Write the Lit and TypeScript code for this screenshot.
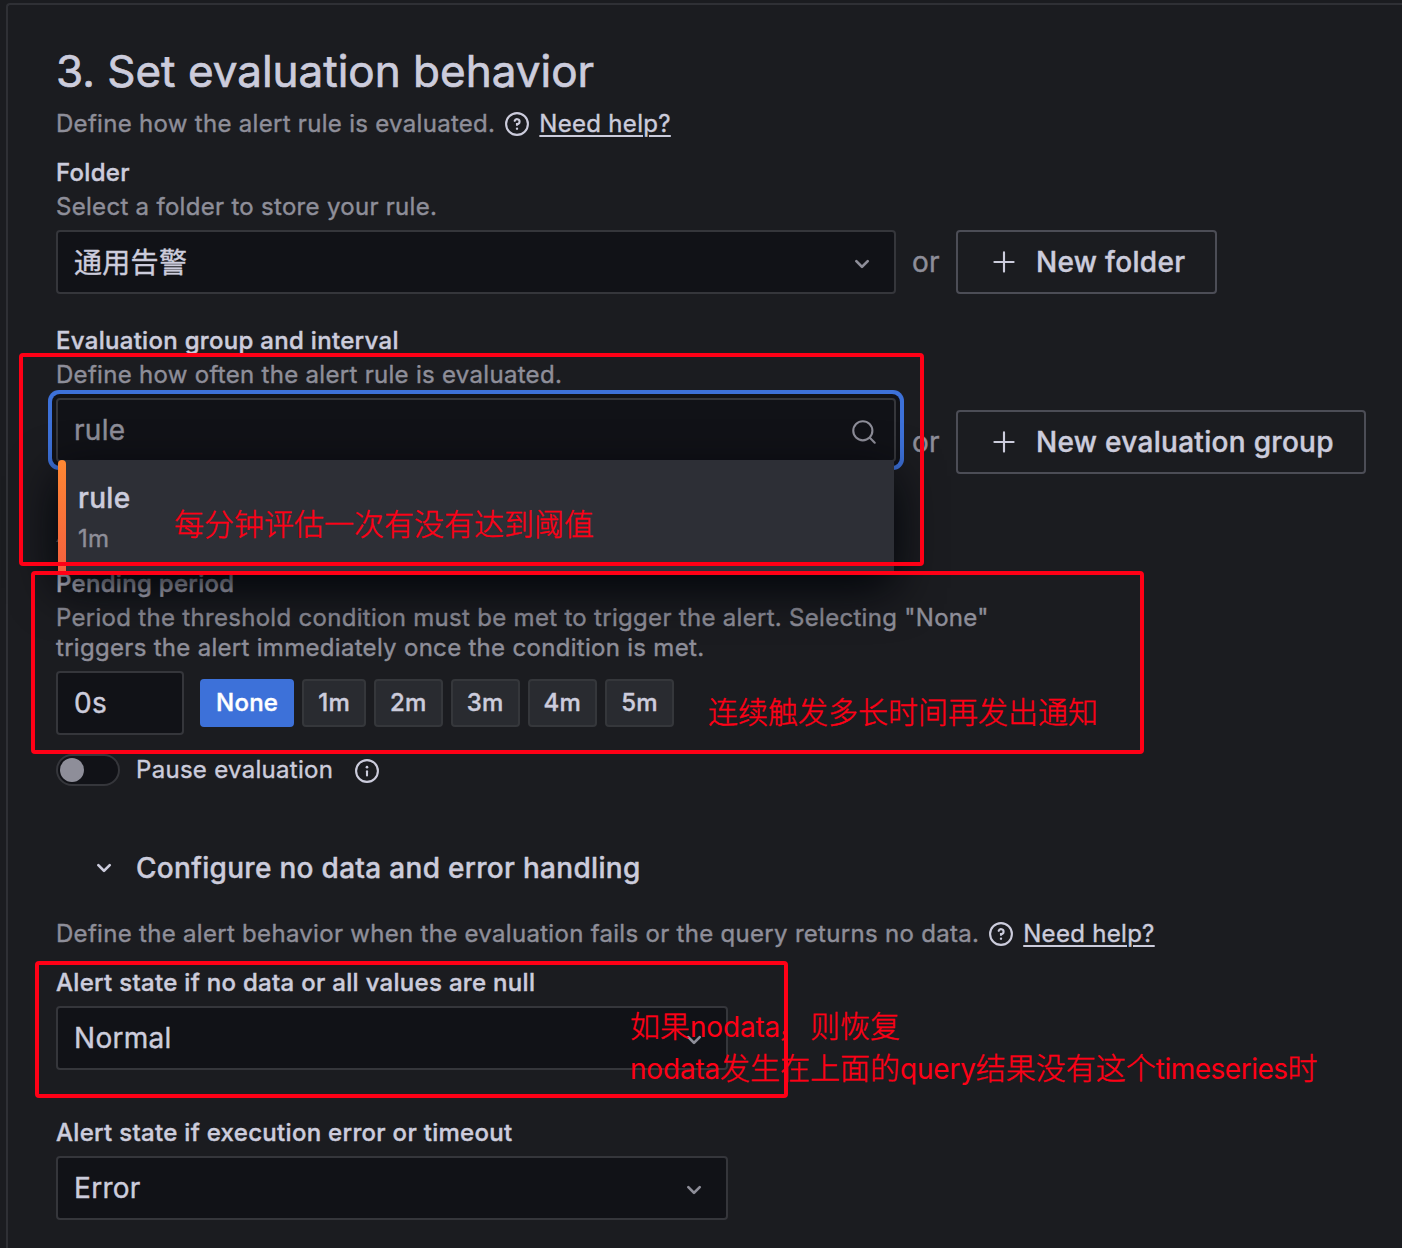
import { LitElement, html, css, svg } from "lit";
import { customElement, property } from "lit/decorators.js";

const ICONS: Record<string, unknown> = {
  question: svg`
    <circle class="s" cx="12" cy="12" r="9.35"></circle>
    <path class="s" d="M10 9.3A2.15 2.15 0 1 1 12 12.1V12.9"></path>
    <circle cx="12" cy="16" r="1"></circle>`,
  info: svg`
    <circle class="s" cx="12" cy="12" r="9.35"></circle>
    <path class="s" d="M12 12.2V15.8"></path>
    <circle cx="12" cy="8.7" r="1.15"></circle>`,
  down: svg`<path d="M17,9.17a1,1,0,0,0-1.41,0L12,12.71,8.46,9.17a1,1,0,0,0-1.41,0,1,1,0,0,0,0,1.42l4.24,4.24a1,1,0,0,0,1.42,0L17,10.59A1,1,0,0,0,17,9.17Z"></path>`,
  plus: svg`<path d="M19.2,11.2H12.8V4.8a.8.8,0,0,0-1.6,0v6.4H4.8a.8.8,0,0,0,0,1.6h6.4v6.4a.8.8,0,0,0,1.6,0V12.8h6.4a.8.8,0,0,0,0-1.6Z"></path>`,
  search: svg`
    <circle class="s" cx="11" cy="11" r="8.2"></circle>
    <path class="s" d="M17 17L21.2 21.2"></path>`,
};

@customElement("ui-icon")
export class UiIcon extends LitElement {
  @property() name = "down";

  static styles = css`
    :host { display: block; width: 32px; height: 32px; flex: none; }
    svg { display: block; width: 100%; height: 100%; fill: currentColor; }
    .s { fill: none; stroke: currentColor; stroke-width: 1.8; stroke-linecap: round; }
  `;

  render() {
    return html`<svg viewBox="0 0 24 24">${ICONS[this.name]}</svg>`;
  }
}

@customElement("app-root")
export class AppRoot extends LitElement {
  private periods = ["None", "1m", "2m", "3m", "4m", "5m"];

  static styles = css`
    :host {
      display: block;
      position: relative;
      width: 1402px;
      height: 1248px;
      overflow: hidden;
      background: #1b1c20;
      color: #ccccdc;
      font-family: Inter, "Noto Sans CJK SC", sans-serif;
      font-size: 24px;
      line-height: 30px;
      letter-spacing: 0.0125em;
      -webkit-text-stroke: 0.4px currentColor;
      box-sizing: border-box;
      padding: 3px 0 0 6px;
    }
    *, *::before { box-sizing: border-box; }
    .panel {
      height: 1300px;
      border: 2px solid #2f3035;
      border-right: 0;
      border-radius: 4px 0 0 0;
      padding: 40px 0 0 48px;
    }
    h2 {
      margin: 0;
      font-size: 44px;
      line-height: 52px;
      font-weight: 400;
      letter-spacing: 0;
      -webkit-text-stroke-width: 0.7px;
    }
    .muted { color: #8e8e99; }
    .line { display: flex; align-items: center; height: 30px; }
    .line ui-icon { width: 28px; height: 28px; margin: 0 8px; }
    .intro { margin-top: 12px; }
    .link { color: #ccccdc; text-decoration: underline; text-underline-offset: 3px; text-decoration-thickness: 2px; }
    .label { font-weight: 500; height: 30px; }
    .gap-label { margin-top: 19px; }
    .eval { margin-top: 32px; }
    .hint { margin-top: 4px; color: #8e8e99; }
    .row { display: flex; align-items: center; gap: 16px; margin-top: 8px; font-size: 28px; letter-spacing: 0.0107em; }
    .input {
      display: flex;
      align-items: center;
      justify-content: space-between;
      width: 840px;
      height: 64px;
      padding: 0 16px;
      border: 2px solid #35363b;
      border-radius: 4px;
      background: #111217;
      font-size: 28px;
      letter-spacing: 0.0107em;
    }
    .input ui-icon { color: #8e8e99; margin-top: 4px; }
    .cjk { padding-top: 2px; }
    .state { width: 672px; margin-top: 8px; }
    .focused { position: relative; color: #8e8e99; box-shadow: 0 0 0 4px #111217, 0 0 0 8px #3d71d9; }
    .focused ui-icon { width: 28px; height: 28px; }
    .group { align-items: flex-start; }
    .group .or, .group .btn { margin-top: 12px; }
    .or { width: 28px; line-height: 64px; color: #8e8e99; }
    .btn {
      display: flex;
      align-items: center;
      gap: 16px;
      height: 64px;
      padding: 0 30px;
      border: 2px solid #4c4d56;
      border-radius: 4px;
      font-weight: 500;
      white-space: nowrap;
    }
    .menu {
      position: absolute;
      left: 0;
      top: 60px;
      width: 836px;
      height: 112px;
      padding: 22px 0 0 20px;
      background: #2d2f36;
      box-shadow: 0 16px 48px #010409;
      color: #ccccdc;
      z-index: 2;
    }
    .menu::before {
      content: "";
      position: absolute;
      left: 0;
      top: 0;
      width: 8px;
      height: 112px;
      border-radius: 4px 4px 0 0;
      background: linear-gradient(#ff8833, #f55f3e);
    }
    .opt { font-weight: 500; line-height: 32px; }
    .sub { font-size: 24px; line-height: 30px; margin-top: 10px; color: #8e8e99; letter-spacing: 0.0125em; }
    .pending { margin-top: 95px; }
    .wide { width: 960px; }
    .periods { gap: 8px; }
    .duration { width: 128px; margin-right: 8px; }
    .chip {
      display: flex;
      align-items: center;
      height: 48px;
      padding: 0 14px;
      border: 2px solid #35373b;
      border-radius: 4px;
      background: #292b30;
      font-size: 24px;
      font-weight: 500;
      letter-spacing: 0.0107em;
    }
    .chip.on { background: #3d71d9; border-color: #3d71d9; color: #fff; }
    .pause { display: flex; align-items: center; margin-top: 19px; height: 32px; }
    .switch {
      width: 64px;
      height: 32px;
      padding: 2px;
      border: 2px solid #35363b;
      border-radius: 16px;
      background: #111217;
      margin-right: 16px;
    }
    .knob { width: 24px; height: 24px; border-radius: 50%; background: #8e8e99; }
    .pause ui-icon { width: 28px; height: 28px; margin: 2px 0 0 20px; }
    .collapse {
      display: flex;
      align-items: center;
      gap: 16px;
      height: 32px;
      margin: 66px 0 0 32px;
      font-size: 28px;
      font-weight: 500;
      letter-spacing: 0.0107em;
    }
    .nodata { margin-top: 35px; }
    .exec { margin-top: 48px; }
    .mark { position: absolute; border: 4px solid #ff0016; border-radius: 4px; z-index: 5; }
    .m1 { left: 19px; top: 353px; width: 905px; height: 213px; }
    .m2 { left: 31px; top: 571px; width: 1113px; height: 183px; }
    .m3 { left: 35px; top: 961px; width: 753px; height: 137px; }
    .note {
      position: absolute;
      z-index: 6;
      color: #ff0016;
      font: 300 30px/42px "Noto Sans CJK SC", sans-serif;
      letter-spacing: 0;
      white-space: nowrap;
    }
    .latin {
      font-family: Inter, sans-serif;
      font-size: 28px;
      font-weight: 400;
      line-height: 1;
      letter-spacing: -0.2px;
      -webkit-text-stroke-width: 0;
    }
    .tight { letter-spacing: -0.5px; }
    .comma { position: relative; left: -2px; }
    .n1 { left: 174px; top: 501px; }
    .n2 { left: 708px; top: 689px; }
    .n3 { left: 630px; top: 1003px; }
    .speck {
      position: absolute;
      left: 56px;
      top: 537px;
      width: 3px;
      height: 5px;
      background: #6e6e78;
      clip-path: polygon(100% 0, 100% 100%, 0 100%);
    }
  `;

  private help() {
    return html`<ui-icon name="question"></ui-icon><span class="link">Need help?</span>`;
  }

  render() {
    return html`
      <div class="panel">
        <h2>3. Set evaluation behavior</h2>
        <div class="line intro">
          <span class="muted">Define how the alert rule is evaluated.</span>${this.help()}
        </div>

        <div class="label gap-label">Folder</div>
        <div class="hint">Select a folder to store your rule.</div>
        <div class="row">
          <div class="input"><span class="cjk">通用告警</span><ui-icon name="down"></ui-icon></div>
          <span class="or">or</span>
          <div class="btn"><ui-icon name="plus"></ui-icon>New folder</div>
        </div>

        <div class="label eval">Evaluation group and interval</div>
        <div class="hint">Define how often the alert rule is evaluated.</div>
        <div class="row group">
          <div class="input focused">
            <span>rule</span><ui-icon name="search"></ui-icon>
            <div class="menu">
              <div class="opt">rule</div>
              <div class="sub">1m</div>
            </div>
          </div>
          <span class="or">or</span>
          <div class="btn"><ui-icon name="plus"></ui-icon>New evaluation group</div>
        </div>

        <div class="label pending">Pending period</div>
        <div class="hint wide">
          Period the threshold condition must be met to trigger the alert. Selecting "None" triggers the
          alert immediately once the condition is met.
        </div>
        <div class="row periods">
          <div class="input duration">0s</div>
          ${this.periods.map((p, i) => html`<div class="chip ${i === 0 ? "on" : ""}">${p}</div>`)}
        </div>

        <div class="pause">
          <div class="switch"><div class="knob"></div></div>
          <span>Pause evaluation</span><ui-icon name="info"></ui-icon>
        </div>

        <div class="collapse"><ui-icon name="down"></ui-icon>Configure no data and error handling</div>
        <div class="line nodata">
          <span class="muted">Define the alert behavior when the evaluation fails or the query returns no data.</span
          >${this.help()}
        </div>
        <div class="label gap-label">Alert state if no data or all values are null</div>
        <div class="input state"><span>Normal</span><ui-icon name="down"></ui-icon></div>
        <div class="label exec">Alert state if execution error or timeout</div>
        <div class="input state"><span>Error</span><ui-icon name="down"></ui-icon></div>
      </div>

      <div class="speck"></div>
      <div class="mark m1"></div>
      <div class="mark m2"></div>
      <div class="mark m3"></div>
      <div class="note n1">每分钟评估一次有没有达到阈值</div>
      <div class="note n2">连续触发多长时间再发出通知</div>
      <div class="note n3">如果<span class="latin">nodata</span><span class="comma">，</span>则恢复<br /><span class="latin">nodata</span>发生在上面的<span class="latin">query</span>结果没有这个<span class="latin tight">timeseries</span>时</div>
    `;
  }
}
